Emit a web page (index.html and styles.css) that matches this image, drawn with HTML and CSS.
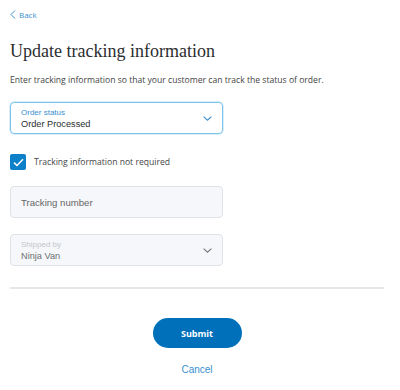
FILE: index.html
```html
<!DOCTYPE html>
<html lang="en">
<head>
    <meta charset="UTF-8">
    <title>Update tracking information</title>
    <link rel="stylesheet" href="styles.css">
</head>
<body>
    <div class="page">
        <a href="#" class="back-link">
            <svg width="6" height="9" viewBox="0 0 6 9"><path d="M5 0.5L1 4.5L5 8.5" fill="none" stroke="#3a8fd0" stroke-width="1"/></svg>
            Back
        </a>
        <h1>Update tracking information</h1>
        <p class="intro">Enter tracking information so that your customer can track the status of order.</p>

        <div class="field select-field active">
            <div class="field-text">
                <span class="field-label">Order status</span>
                <span class="field-value">Order Processed</span>
            </div>
            <svg class="chevron" width="9" height="5" viewBox="0 0 9 5"><path d="M0.6 0.6L4.5 4.2L8.4 0.6" fill="none" stroke="#3a8fd0" stroke-width="1.1"/></svg>
        </div>

        <label class="check-row">
            <span class="checkbox">
                <svg width="11" height="9" viewBox="0 0 11 9"><path d="M1 4.6L4 7.5L10 1.2" fill="none" stroke="#fff" stroke-width="1.5"/></svg>
            </span>
            Tracking information not required
        </label>

        <div class="field input-field disabled">
            <span class="placeholder">Tracking number</span>
        </div>

        <div class="field select-field disabled">
            <div class="field-text">
                <span class="field-label">Shipped by</span>
                <span class="field-value">Ninja Van</span>
            </div>
            <svg class="chevron" width="9" height="5" viewBox="0 0 9 5"><path d="M0.6 0.6L4.5 4.2L8.4 0.6" fill="none" stroke="#777" stroke-width="1.1"/></svg>
        </div>

        <hr class="divider">

        <div class="actions">
            <button class="submit-btn">Submit</button>
            <a href="#" class="cancel-link">Cancel</a>
        </div>
    </div>
</body>
</html>
```

FILE: styles.css
```css
body {
    margin: 0;
    background-color: #fff;
    font-family: 'Liberation Sans', Arial, sans-serif;
    color: #2c2e2f;
}
.page {
    padding: 5px 16px 0 10px;
}
.back-link {
    display: inline-flex;
    align-items: center;
    gap: 3px;
    font-family: 'Open Sans', sans-serif;
    font-size: 8px;
    color: #3a8fd0;
    text-decoration: none;
    height: 11px;
}
h1 {
    font-family: 'Liberation Serif', serif;
    font-weight: normal;
    font-size: 18px;
    color: #2c2e2f;
    margin: 17px 0 0;
    line-height: 22px;
}
.intro {
    font-family: 'Open Sans', sans-serif;
    font-size: 8.6px;
    color: #444;
    margin: 12px 0 0;
    line-height: 12px;
}
.field {
    width: 213px;
    height: 32px;
    box-sizing: border-box;
    border-radius: 4px;
    display: flex;
    align-items: center;
    justify-content: space-between;
    padding: 1px 10px 0 10px;
}
.select-field.active {
    margin-top: 16px;
    border: 1px solid #7cc4ec;
    box-shadow: 0 0 0 0.5px #b6def5;
}
.field-text {
    display: flex;
    flex-direction: column;
}
.field-label {
    font-size: 8px;
    line-height: 11px;
    color: #3a8fd0;
}
.field-value {
    font-size: 9.2px;
    line-height: 12px;
    color: #2c2e2f;
}
.check-row {
    display: flex;
    align-items: center;
    gap: 8px;
    margin-top: 20px;
    font-family: 'Open Sans', sans-serif;
    font-size: 8.6px;
    color: #444;
}
.checkbox {
    width: 16px;
    height: 16px;
    background-color: #0c81c9;
    border-radius: 2px;
    display: flex;
    align-items: center;
    justify-content: center;
}
.disabled {
    background-color: #f5f7fa;
    border: 1px solid #dfe2e7;
}
.input-field {
    margin-top: 16px;
}
.placeholder {
    font-size: 9.6px;
    color: #666;
}
.select-field.disabled {
    margin-top: 16px;
}
.select-field.disabled .field-label {
    color: #c4c6c9;
}
.select-field.disabled .field-value {
    color: #6c6e70;
}
.divider {
    border: none;
    height: 2px;
    background-color: #e6e6e6;
    margin: 21px 0 0;
}
.actions {
    display: flex;
    flex-direction: column;
    align-items: center;
}
.submit-btn {
    margin-top: 29px;
    width: 89px;
    height: 30px;
    border: none;
    border-radius: 15px;
    background-color: #0070ba;
    color: #fff;
    font-family: 'Open Sans', sans-serif;
    font-weight: bold;
    font-size: 9px;
}
.cancel-link {
    margin-top: 16px;
    font-size: 10px;
    color: #3a8fd0;
    text-decoration: none;
}
```
